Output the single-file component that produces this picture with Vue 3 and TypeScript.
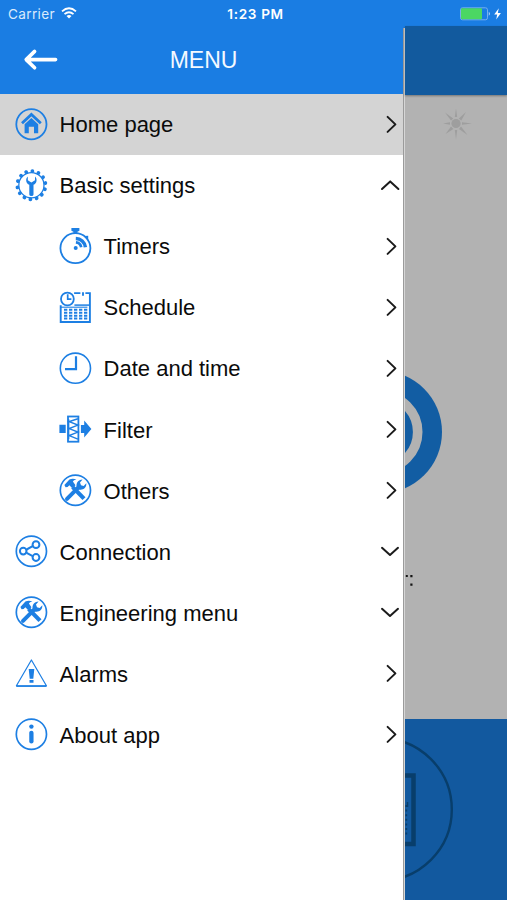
<script setup lang="ts">
import { ref } from 'vue'

type Icon = 'home' | 'gear' | 'timer' | 'schedule' | 'clock' | 'filter' | 'tools' | 'share' | 'alarm' | 'info'
type Arrow = 'right' | 'up' | 'down'

interface MenuItem {
  label: string
  icon: Icon
  arrow: Arrow
  nested?: boolean
}

const items: MenuItem[] = [
  { label: 'Home page', icon: 'home', arrow: 'right' },
  { label: 'Basic settings', icon: 'gear', arrow: 'up' },
  { label: 'Timers', icon: 'timer', arrow: 'right', nested: true },
  { label: 'Schedule', icon: 'schedule', arrow: 'right', nested: true },
  { label: 'Date and time', icon: 'clock', arrow: 'right', nested: true },
  { label: 'Filter', icon: 'filter', arrow: 'right', nested: true },
  { label: 'Others', icon: 'tools', arrow: 'right', nested: true },
  { label: 'Connection', icon: 'share', arrow: 'down' },
  { label: 'Engineering menu', icon: 'tools', arrow: 'down' },
  { label: 'Alarms', icon: 'alarm', arrow: 'right' },
  { label: 'About app', icon: 'info', arrow: 'right' },
]

const active = ref('Home page')

const arrows: Record<Arrow, string> = {
  right: 'M7.6 2.7 L15.4 10.2 L7.6 17.7',
  up: 'M2 13.8 L10.2 6.2 L18.4 13.8',
  down: 'M2 6.6 L10 13.8 L18 6.6',
}

const teeth = Array.from({ length: 14 }, (_, i) => (i * 360) / 14 + 4)
</script>

<template>
  <div class="screen">
    <header class="status">
      <div class="carrier">
        <span>Carrier</span>
        <svg class="wifi" width="16" height="12" viewBox="0 0 16 12" fill="none" stroke="#fff" stroke-width="1.8">
          <path d="M1 4.4 Q8 -1.8 15 4.4" />
          <path d="M3.5 7.2 Q8 3.2 12.5 7.2" />
          <path d="M8 11.4 L5.5 8.9 Q8 7 10.5 8.9Z" fill="#fff" stroke="none" />
        </svg>
      </div>
      <div class="time">1:23 PM</div>
      <div class="power">
        <svg width="43" height="14" viewBox="0 0 43 14">
          <rect x=".5" y=".8" width="27" height="12" rx="2" fill="none" stroke="#76aeee" />
          <rect x="1" y="1.3" width="21" height="11" rx="1" fill="#4bd763" />
          <path d="M28.8 4.8 Q30.8 6.8 28.8 8.8Z" fill="#cfe2f8" />
          <path d="M38.8 1.3 L34.2 7.6 H37.2 L36.2 12.5 L40.9 5.9 H37.8Z" fill="#fff" />
        </svg>
      </div>
    </header>

    <div class="body">
      <nav class="drawer">
        <div class="title-bar">
          <svg class="back" width="36" height="24" viewBox="0 0 36 24" fill="none" stroke="#fff" stroke-width="3.6" stroke-linecap="round" stroke-linejoin="round">
            <path d="M4.2 11.6 H33.6 M12.6 3.4 L4.2 11.6 L12.6 19.8" />
          </svg>
          <h1>MENU</h1>
        </div>
        <ul>
          <li
            v-for="item in items"
            :key="item.label"
            :class="{ nested: item.nested, active: item.label === active }"
            @click="active = item.label"
          >
            <svg class="icon" width="34" height="38" viewBox="-0.4 0.8 34 38" fill="none" stroke="#1d7fe3" stroke-width="1.8">
              <g v-if="item.icon === 'home'">
                <circle cx="17" cy="19" r="15.1" />
                <path d="M7.6 18 L17 9.3 L26.4 18" stroke-width="2.8" />
                <path d="M10.2 19 L17 12.8 L23.8 19 V28 H19.6 V21.5 H14.4 V28 H10.2Z" fill="#1d7fe3" stroke="none" />
              </g>
              <g v-else-if="item.icon === 'gear'">
                <circle cx="17" cy="19" r="12.6" stroke-width="1.3" />
                <circle
                  v-for="angle in teeth"
                  :key="angle"
                  cx="17"
                  cy="4.9"
                  r="1.9"
                  fill="#1d7fe3"
                  stroke="none"
                  :transform="`rotate(${angle} 17 19)`"
                />
                <path d="M13.4 10.2 C10.8 12.6 11.4 17 14.9 18.6 V28.2 Q14.9 29.8 17 29.8 Q19.1 29.8 19.1 28.2 V18.6 C22.6 17 23.2 12.6 20.6 10.2 V14 L17 16.4 L13.4 14Z" fill="#1d7fe3" stroke="none" />
              </g>
              <g v-else-if="item.icon === 'timer'">
                <circle cx="17" cy="21" r="15" />
                <path d="M13 .9 H21 V3.6 L19 4.6 V6.2 H15 V4.6 L13 3.6Z M25.5 8.9 L29.8 8.6 L29.8 13.2Z" fill="#1d7fe3" stroke="none" />
                <circle cx="17.3" cy="20.8" r="2" fill="#1d7fe3" stroke="none" />
                <path d="M17.5 15.2 A6 6 0 0 1 22.8 20" stroke-width="2.7" />
                <path d="M17.4 11.2 A10 10 0 0 1 27 20" stroke-width="3.5" />
              </g>
              <g v-else-if="item.icon === 'schedule'">
                <path d="M2.3 17 V33.8 H31.5 V4.9 H27 M15.7 4.9 H22 M24.6 4 V7.6" stroke-width="1.9" />
                <circle cx="9" cy="10.8" r="6.4" />
                <path d="M9.3 6 V11 H13" stroke-width="1.7" />
                <path d="M16 16.9 H31" stroke-width="1.5" />
                <path d="M2 19 H29" stroke-width="1.1" />
                <path d="M5.6 21.5 H29 M5.6 24.5 H29 M5.6 27.5 H29 M5.6 30.3 H29" stroke-width="2" stroke-dasharray="3.3 1.7" />
              </g>
              <g v-else-if="item.icon === 'clock'">
                <circle cx="17" cy="19" r="15.1" stroke-width="1.6" />
                <path d="M17.6 7 V20 H6.6" stroke-width="2.2" />
              </g>
              <g v-else-if="item.icon === 'filter'">
                <path d="M1 14.5 H7.3 V22.9 H1Z M22.5 14.8 H25.8 V10.2 L33 18.8 L25.8 27.4 V22.8 H22.5Z" fill="#1d7fe3" stroke="none" />
                <rect x="9.6" y="6.3" width="10.4" height="25.2" stroke-width="1.8" />
                <path d="M19.5 8.5 L10.8 11.4 L19.5 14.9 L10.8 18.4 L19.5 21.9 L10.8 25.4 L19.5 28.9 M10.2 9 V29" stroke-width="1.5" />
              </g>
              <g v-else-if="item.icon === 'tools'">
                <circle cx="17" cy="19" r="15.1" stroke-width="1.7" />
                <path d="M14.3 15.9 L25.6 27.4" stroke-width="4.2" />
                <path d="M8.6 27.6 L20.8 15.4" stroke-width="4" stroke-linecap="round" />
                <path d="M7.2 16 L6 13.9 L11 8.4 Q14 6.7 18 8.2 Q15 8.5 14.5 10.4 L17.1 14 L13.8 17 L11 14 L9.2 15.8Z" fill="#1d7fe3" stroke="none" />
                <path d="M18.4 16.8 C17.2 12.2 19.6 8.5 24.2 8.4 L21.6 11.3 L22.6 14 L25.3 14.7 L27.9 12 C28.3 16.8 24.5 19.3 20.2 18.2Z" fill="#1d7fe3" stroke="none" />
              </g>
              <g v-else-if="item.icon === 'share'">
                <circle cx="17" cy="19" r="15.1" stroke-width="1.7" />
                <path d="M12.2 17.3 L18.3 14 M12.2 20.6 L18.3 23.9" stroke-width="2" />
                <circle cx="8.8" cy="18.9" r="3.3" stroke-width="2" />
                <circle cx="21.6" cy="12.5" r="3.4" stroke-width="2" />
                <circle cx="21.6" cy="25.3" r="3.4" stroke-width="2" />
              </g>
              <g v-else-if="item.icon === 'alarm'">
                <path d="M17 5.8 L32 31.6 H2Z" stroke-width="1.2" stroke-linejoin="round" />
                <path d="M2 32 H32" stroke-width="1.4" />
                <path d="M14.3 14.8 H19.9 L18.9 24.6 H15.3Z M15.1 25.8 H19.1 V28.6 H15.1Z" fill="#1d7fe3" stroke="none" />
              </g>
              <g v-else>
                <circle cx="17" cy="19" r="15.1" stroke-width="1.7" />
                <circle cx="17" cy="11.4" r="2.2" fill="#1d7fe3" stroke="none" />
                <path d="M17 17.6 V26.2" stroke-width="4.3" stroke-linecap="round" />
              </g>
            </svg>
            <span class="label">{{ item.label }}</span>
            <svg class="arrow" width="20" height="20" viewBox="0 0.8 20 20" fill="none" stroke="#1b1b1b" stroke-width="2" stroke-linecap="round" stroke-linejoin="round">
              <path :d="arrows[item.arrow]" />
            </svg>
          </li>
        </ul>
      </nav>
      <div class="edge"></div>

      <main class="scene">
        <div class="scene-bar"></div>
        <div class="scene-main">
          <svg width="102" height="624" viewBox="405 95 102 624">
            <g fill="#9e9e9e">
              <circle cx="456" cy="123.5" r="4.6" />
              <path d="M454.8 117 L456 108.5 L457.2 117Z M454.8 130 L456 139.5 L457.2 130Z M450 122.3 L443 123.5 L450 124.7Z M462 122.3 L472 123.5 L462 124.7Z M451 120.6 L445 112.5 L453.2 118.4Z M458.8 118.4 L466 112 L461.3 120.6Z M451 126.5 L445.5 134 L453.4 129Z M459 129 L467.5 135 L461 126.5Z" />
            </g>
            <circle cx="380.8" cy="432" r="61.2" fill="#125da3" />
            <circle cx="380.8" cy="432" r="36.9" fill="none" stroke="#b2b2b2" stroke-width="9.6" />
            <path d="M405.8 575 H407.8 V577 H405.8Z M410.3 575 H412.5 V577.2 H410.3Z M410.3 583.6 H412.5 V585.8 H410.3Z" fill="#151515" />
          </svg>
        </div>
        <div class="scene-foot">
          <svg width="102" height="181" viewBox="405 719 102 181" fill="none" stroke="#083e6b">
            <circle cx="380.6" cy="809.5" r="71.2" stroke-width="2.4" />
            <path d="M403 775.5 H413.5 V844 H403" stroke-width="4.5" />
            <path d="M406.3 805 V836" stroke-width="1.8" stroke-dasharray="2 2.6" />
            <path d="M407.5 802 V807" stroke-width="1.5" />
          </svg>
        </div>
      </main>
    </div>
  </div>
</template>

<style>
body {
  background: #fff;
}
</style>

<style scoped>
.screen {
  display: flex;
  flex-direction: column;
  width: 507px;
  height: 900px;
  overflow: hidden;
  font-family: 'Liberation Sans', Arial, sans-serif;
  color: #0b0b0b;
}

.status {
  display: grid;
  grid-template-columns: 1fr auto 1fr;
  align-items: center;
  box-sizing: border-box;
  height: 26px;
  padding: 1px 4px 0 8px;
  background: #1a7de3;
  color: #fff;
  font-family: Inter, Roboto, sans-serif;
  font-size: 13px;
}

.carrier {
  display: flex;
  align-items: center;
  gap: 6px;
  color: #d9eafc;
  font-size: 13.6px;
  letter-spacing: 0.35px;
}

.wifi {
  margin-top: -2px;
}

.time {
  font-size: 13.6px;
  font-weight: 600;
  letter-spacing: 0.65px;
}

.power {
  display: flex;
  justify-content: flex-end;
}

.body {
  display: flex;
  flex: 1;
  min-height: 0;
}

.drawer {
  width: 403px;
  background: #fff;
}

.title-bar {
  display: grid;
  grid-template-columns: 36px 1fr 36px;
  align-items: center;
  height: 68px;
  padding: 0 18px 0 22px;
  background: #1a7de3;
}

h1 {
  margin: 0;
  color: #f4f9ff;
  font-size: 23px;
  font-weight: 400;
  text-align: center;
}

ul {
  margin: 0;
  padding: 0;
  list-style: none;
}

li {
  display: flex;
  align-items: center;
  box-sizing: border-box;
  height: 61.1px;
  padding: 0 3px 0 14px;
}

li.nested {
  padding-left: 58px;
}

li.active {
  background: #d4d4d4;
}

.icon {
  flex: none;
  margin-right: 11.6px;
}

.label {
  flex: 1;
  padding-top: 1px;
  font-size: 22px;
  line-height: 26px;
  white-space: nowrap;
}

.arrow {
  flex: none;
}

.edge {
  width: 2px;
  background:
    linear-gradient(#1a7de3, #1a7de3) top / 2px 2px no-repeat,
    linear-gradient(to right, #9b9b9b 1px, #d6d6d6 1px);
}

.scene {
  display: flex;
  flex: 1;
  flex-direction: column;
  background: #b2b2b2;
}

.scene-bar {
  height: 69px;
  background: #125a9e;
  box-shadow: 0 1px 2px rgba(0, 0, 0, 0.35);
}

.scene-main {
  height: 624px;
}

.scene-foot {
  flex: 1;
  background: #12599f;
}

.scene svg {
  display: block;
}
</style>
